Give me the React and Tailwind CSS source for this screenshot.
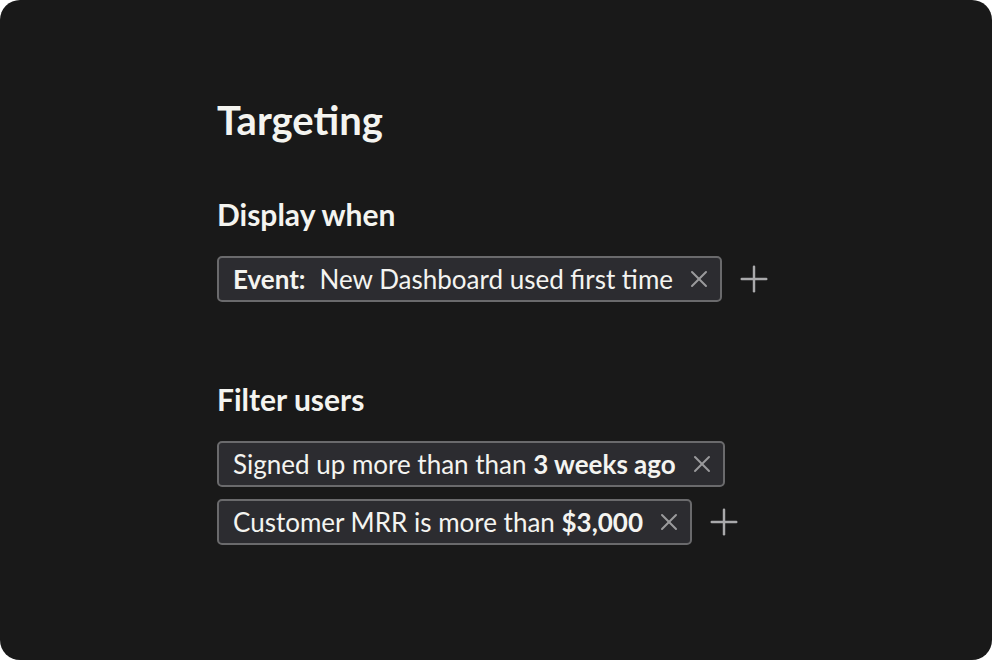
import { X, Plus } from "lucide-react";

function Chip({ children }) {
  return (
    <div className="flex h-[46px] items-center gap-[12px] rounded-[5px] border-2 border-[#6a6a6c] bg-[#2c2c30] pl-[14px] pr-[7px] text-[26px] text-[#f4f4f0]">
      <span className="whitespace-nowrap">{children}</span>
      <X className="h-[28px] w-[28px] text-[#9a9a9c]" strokeWidth={1.7} />
    </div>
  );
}

function AddButton() {
  return <Plus className="h-[42px] w-[42px] text-[#a9a9ab]" strokeWidth={1.4} />;
}

export default function App() {
  return (
    <div className="bg-white">
      <div
        className="h-[660px] w-[992px] rounded-[20px] bg-[#191919] pl-[217px] pt-[96px] text-[#f4f4f0]"
        style={{ fontFamily: "Lato, 'Noto Sans', sans-serif" }}
      >
        <h1 className="text-[40px] font-bold leading-[48px]">Targeting</h1>

        <h2 className="mt-[53px] text-[30px] font-bold leading-[34px]">Display when</h2>
        <div className="mt-[25px] flex items-center gap-[11px]">
          <Chip>
            <b className="font-bold">Event:</b>
            <span className="ml-[14px]">New Dashboard used first time</span>
          </Chip>
          <AddButton />
        </div>

        <h2 className="mt-[80px] text-[30px] font-bold leading-[34px]">Filter users</h2>
        <div className="mt-[25px] flex flex-col gap-[12px]">
          <div className="flex items-center">
            <Chip>
              Signed up more than than <b className="font-bold">3 weeks ago</b>
            </Chip>
          </div>
          <div className="flex items-center gap-[11px]">
            <Chip>
              Customer MRR is more than <b className="font-bold">$3,000</b>
            </Chip>
            <AddButton />
          </div>
        </div>
      </div>
    </div>
  );
}
